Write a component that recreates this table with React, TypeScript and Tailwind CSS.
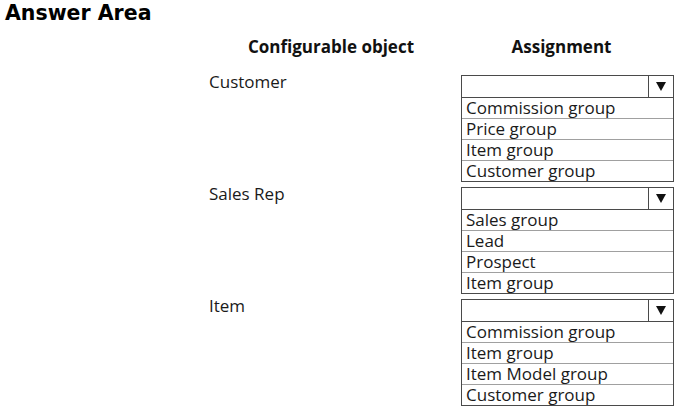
import React from "react";

const rows = [
  { label: "Customer", items: ["Commission group", "Price group", "Item group", "Customer group"] },
  { label: "Sales Rep", items: ["Sales group", "Lead", "Prospect", "Item group"] },
  { label: "Item", items: ["Commission group", "Item group", "Item Model group", "Customer group"] },
];

function Box({ items }: { items: string[] }) {
  return (
    <div className="w-[213px] border border-[#4a4a4a] bg-white">
      <div className="flex h-[22px] border-b border-[#4a4a4a]">
        <div className="flex-1" />
        <div className="w-[25px] border-l border-[#4a4a4a] flex items-center justify-center">
          <svg width="10" height="9" viewBox="0 0 10 9">
            <polygon points="0,0 10,0 5,9" fill="#111" />
          </svg>
        </div>
      </div>
      {items.map((it, i) => (
        <div
          key={i}
          className={
            i < items.length - 1
              ? "h-[21px] pl-[4px] pb-[2px] flex items-center text-[17px] leading-none text-[#1a1a1a] border-b border-[#a0a0a0]"
              : "h-[20px] pl-[4px] pb-[2px] flex items-center text-[17px] leading-none text-[#1a1a1a]"
          }
        >
          {it}
        </div>
      ))}
    </div>
  );
}

export default function App() {
  return (
    <div
      className="w-[677px] h-[408px] bg-white overflow-hidden"
      style={{ fontFamily: '"Open Sans", "Noto Sans", sans-serif' }}
    >
      <div
        className="pl-[5px] pt-[1px] text-[20.5px] leading-[24px] font-bold text-black"
        style={{ fontFamily: '"DejaVu Sans", sans-serif' }}
      >
        Answer Area
      </div>
      <div className="ml-[209px] mt-[9px] flex flex-col">
        <div className="flex h-[26px] items-center text-[17px] font-bold text-[#111]">
          <div className="w-[252px] text-center pr-[8px]">Configurable object</div>
          <div className="w-[213px] text-center pr-[12px]">Assignment</div>
        </div>
        <div className="mt-[15px] flex flex-col gap-[5px]">
          {rows.map((r) => (
            <div key={r.label} className="flex items-start">
              <div className="w-[252px] text-[17px] leading-[20px] -mt-[3px] text-[#1a1a1a]">{r.label}</div>
              <Box items={r.items} />
            </div>
          ))}
        </div>
      </div>
    </div>
  );
}
